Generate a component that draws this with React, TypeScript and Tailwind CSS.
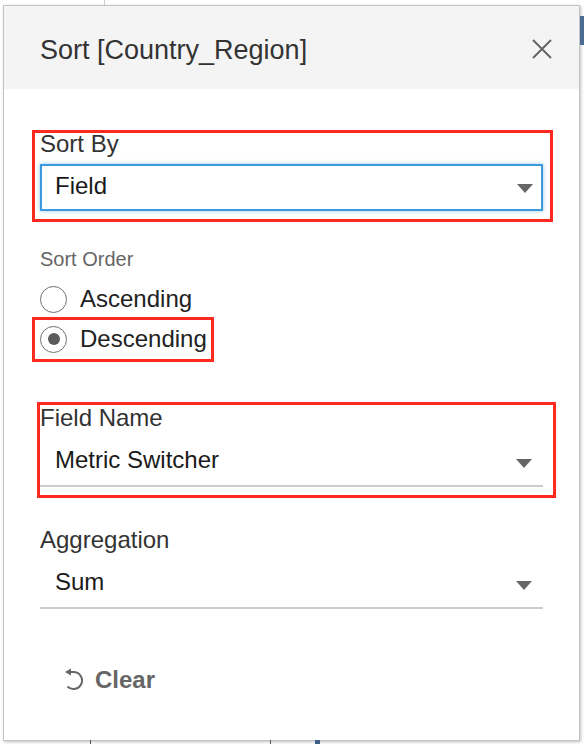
import React from 'react';

function Caret() {
  return (
    <svg width="16" height="9" viewBox="0 0 16 9" className="shrink-0">
      <path d="M0 0h16L8 9z" fill="#666" />
    </svg>
  );
}

function Annotation({ className }: { className: string }) {
  return (
    <div
      className={`pointer-events-none absolute border-[3px] border-[#ff2a1f] ${className}`}
    />
  );
}

function Radio({ checked, label }: { checked?: boolean; label: string }) {
  return (
    <div className="flex h-[40px] items-center gap-[13px]">
      <span className="flex h-[27px] w-[27px] items-center justify-center rounded-full border-[1.5px] border-[#707070] bg-white">
        {checked && <span className="h-[12px] w-[12px] rounded-full bg-[#5a5a5a]" />}
      </span>
      <span className="text-[24px] leading-[28px] text-[#222]">{label}</span>
    </div>
  );
}

function UnderlineSelect({ label, value }: { label: string; value: string }) {
  return (
    <div>
      <div className="text-[24px] leading-[28px] text-[#333]">{label}</div>
      <div className="mt-[14px] flex items-center justify-between border-b-2 border-[#cccccc] pb-[11px] pl-[15px] pr-[11px]">
        <span className="text-[24px] leading-[28px] text-[#1a1a1a]">{value}</span>
        <span className="mt-[6px] flex">
          <Caret />
        </span>
      </div>
    </div>
  );
}

export default function App() {
  return (
    <div className="relative h-[744px] w-[584px] overflow-hidden bg-white font-['Liberation_Sans',Arial,sans-serif]">
      {/* bits of the workbook behind the dialog */}
      <div className="absolute left-[104px] top-0 h-[5px] w-px bg-[#cfcfcf]" />
      <div className="absolute right-0 top-[16px] h-[29px] w-[4px] bg-[#4b6b93]" />
      <div className="absolute bottom-0 left-[90px] h-[4px] w-px bg-[#555]" />
      <div className="absolute bottom-0 left-[270px] h-[4px] w-px bg-[#555]" />
      <div className="absolute bottom-0 left-[315px] h-[4px] w-[5px] bg-[#3e5f86]" />

      <div className="ml-[3px] mt-[5px] h-[736px] w-[577px] border border-[#c4c4c4] bg-white shadow-[1px_1px_3px_rgba(0,0,0,0.25)]">
        {/* Header */}
        <div className="flex h-[83px] items-start justify-between bg-[#f4f4f4] pl-[36px] pr-[27px] pt-[28px]">
          <h1 className="text-[27px] leading-[32px] text-[#333]">Sort [Country_Region]</h1>
          <svg width="20" height="20" viewBox="0 0 20 20" className="mt-[5px]">
            <path d="M1 1L19 19M19 1L1 19" stroke="#666" strokeWidth="2" />
          </svg>
        </div>

        {/* Body */}
        <div className="px-[36px] pt-[41px]">
          {/* Sort By */}
          <div className="relative">
            <div className="text-[24px] leading-[28px] text-[#333]">Sort By</div>
            <div className="mt-[6px] flex h-[47px] items-center justify-between border-2 border-[#3b99dc] pb-[3px] pl-[13px] pr-[8px] shadow-[0_0_4px_rgba(59,153,220,0.55)]">
              <span className="text-[24px] leading-[28px] text-[#1a1a1a]">Field</span>
              <span className="mt-[5px] flex">
                <Caret />
              </span>
            </div>
            <Annotation className="-bottom-[11px] -left-[8px] -right-[10px] top-0" />
          </div>

          {/* Sort Order */}
          <div className="mt-[36px] text-[20px] leading-[24px] text-[#666]">Sort Order</div>
          <div className="mt-[8px]">
            <Radio label="Ascending" />
            <div className="relative w-fit">
              <Radio checked label="Descending" />
              <Annotation className="-bottom-[3px] -left-[8px] -right-[7px] -top-[2px]" />
            </div>
          </div>

          {/* Field Name */}
          <div className="relative mt-[45px]">
            <UnderlineSelect label="Field Name" value="Metric Switcher" />
            <Annotation className="-bottom-[11px] -left-[3px] -right-[13px] -top-[2px]" />
          </div>

          {/* Aggregation */}
          <div className="mt-[39px]">
            <UnderlineSelect label="Aggregation" value="Sum" />
          </div>

          {/* Clear */}
          <button className="mt-[57px] flex items-center gap-[11px] pl-[22px] text-[24px] font-bold leading-[28px] text-[#666]">
            <svg width="22" height="24" viewBox="0 0 22 24">
              <path
                d="M8.5 4H11.5A8.5 8.5 0 1 1 5.49 18.51"
                fill="none"
                stroke="#666"
                strokeWidth="2"
              />
              <path d="M3 4L9 0.5V7.5z" fill="#666" />
            </svg>
            Clear
          </button>
        </div>
      </div>
    </div>
  );
}
